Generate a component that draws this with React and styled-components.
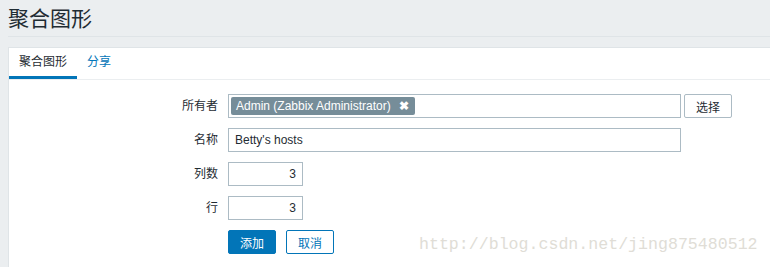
import React from "react";
import styled, { createGlobalStyle } from "styled-components";

const GlobalStyle = createGlobalStyle`
    body {
        margin: 0;
        background: #ebeef0;
        font-family: "Liberation Sans", Arial, "Noto Sans CJK SC", sans-serif;
        color: #1f2c33;
        font-size: 12px;
    }
`;

function App() {
    return (
        <Page>
            <GlobalStyle />
            <Header>
                <Title>聚合图形</Title>
            </Header>
            <Panel>
                <Tabs>
                    <Tab active>聚合图形</Tab>
                    <Tab>分享</Tab>
                </Tabs>
                <Form>
                    <Label>所有者</Label>
                    <Field>
                        <MultiSelect>
                            <TagChip>
                                Admin (Zabbix Administrator)
                                <Remove>✖</Remove>
                            </TagChip>
                        </MultiSelect>
                        <GrayButton>选择</GrayButton>
                    </Field>

                    <Label>名称</Label>
                    <Field>
                        <TextInput width={453} defaultValue="Betty's hosts" />
                    </Field>

                    <Label>列数</Label>
                    <Field>
                        <TextInput width={75} right defaultValue="3" />
                    </Field>

                    <Label>行</Label>
                    <Field>
                        <TextInput width={75} right defaultValue="3" />
                    </Field>

                    <span />
                    <Field>
                        <Button primary>添加</Button>
                        <Button>取消</Button>
                    </Field>
                </Form>
                <Watermark>http://blog.csdn.net/jing875480512</Watermark>
            </Panel>
        </Page>
    );
}

export default App;

const Page = styled.div`
    padding-left: 8px;
    height: 267px;
    overflow: hidden;
`;

const Header = styled.div`
    height: 37px;
    border-bottom: 1px solid #dfe4e7;
    box-sizing: border-box;
`;

const Title = styled.h1`
    margin: 0;
    padding-top: 7px;
    font-size: 21px;
    line-height: 24px;
    font-weight: 400;
    color: #1f2c33;
`;

const Panel = styled.div`
    position: relative;
    margin-top: 10px;
    background: #fff;
    border: 1px solid #dfe4e7;
    border-right: none;
    height: 230px;
`;

const Tabs = styled.div`
    display: flex;
    height: 31px;
    border-bottom: 1px solid #ebeef0;
`;

const Tab = styled.div`
    padding: 0 10px;
    line-height: 28px;
    height: 28px;
    color: ${(p) => (p.active ? "#1f2c33" : "#0275b8")};
    border-bottom: 3px solid ${(p) => (p.active ? "#0275b8" : "transparent")};
`;

const Form = styled.div`
    display: grid;
    grid-template-columns: 209px auto;
    column-gap: 10px;
    row-gap: 10px;
    padding-top: 14px;
`;

const Label = styled.div`
    text-align: right;
    line-height: 24px;
`;

const Field = styled.div`
    display: flex;
    align-items: center;
    gap: 3px;
    height: 24px;
`;

const MultiSelect = styled.div`
    box-sizing: border-box;
    width: 453px;
    height: 24px;
    border: 1px solid #acbbc4;
    padding: 2px;
    display: flex;
    align-items: center;
`;

const TagChip = styled.span`
    display: inline-flex;
    align-items: center;
    height: 18px;
    background: #768d99;
    color: #fff;
    padding: 0 6px 0 5px;
    border-radius: 2px;
    font-size: 12px;
    white-space: nowrap;
`;

const Remove = styled.span`
    margin-left: 8px;
    font-size: 12px;
    font-weight: 700;
`;

const GrayButton = styled.button`
    box-sizing: border-box;
    width: 48px;
    height: 24px;
    background: #fff;
    border: 1px solid #acbbc4;
    border-radius: 2px;
    font-family: inherit;
    font-size: 12px;
    color: #1f2c33;
    padding: 0;
`;

const TextInput = styled.input`
    box-sizing: border-box;
    width: ${(p) => p.width}px;
    height: 24px;
    border: 1px solid #acbbc4;
    padding: 0 6px;
    font-family: inherit;
    font-size: 12px;
    color: #1f2c33;
    text-align: ${(p) => (p.right ? "right" : "left")};
    outline: none;
`;

const Button = styled.button`
    box-sizing: border-box;
    width: 48px;
    height: 24px;
    margin-right: 7px;
    border-radius: 2px;
    border: 1px solid #0275b8;
    background: ${(p) => (p.primary ? "#0275b8" : "#fff")};
    color: ${(p) => (p.primary ? "#fff" : "#0275b8")};
    font-family: inherit;
    font-size: 12px;
    padding: 0;
`;

const Watermark = styled.div`
    position: absolute;
    left: 410px;
    top: 187px;
    font-family: "Liberation Mono", monospace;
    font-size: 16.6px;
    color: #e0ddd6;
    pointer-events: none;
    white-space: nowrap;
`;
